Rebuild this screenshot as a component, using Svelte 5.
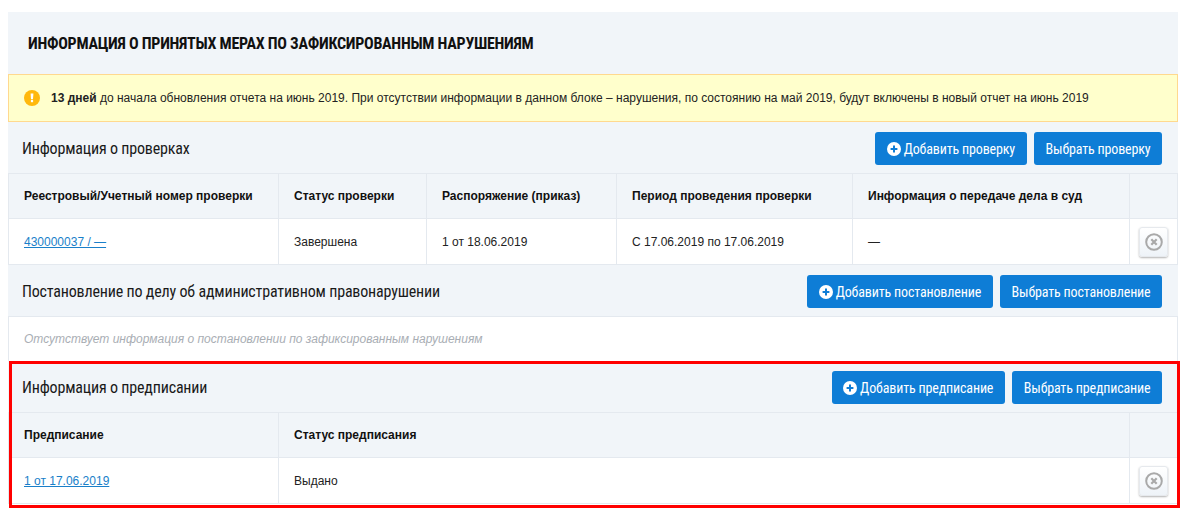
<script>
  const checks = [
    { number: '430000037 / —', status: 'Завершена', order: '1 от 18.06.2019', period: 'С 17.06.2019 по 17.06.2019', court: '—' }
  ];
</script>

{#snippet remove()}
  <button class="remove" aria-label="Удалить">
    <svg width="18" height="18" viewBox="0 0 18 18">
      <circle cx="9" cy="9" r="7.8" fill="none" stroke="#a9a9a9" stroke-width="2" />
      <path d="M6.3 6.3l5.4 5.4M11.7 6.3l-5.4 5.4" stroke="#a9a9a9" stroke-width="2.2" />
    </svg>
  </button>
{/snippet}

{#snippet plus()}
  <svg class="plus" width="14" height="14" viewBox="0 0 14 14">
    <circle cx="7" cy="7" r="7" fill="#fff" />
    <path d="M7 3.6v6.8M3.6 7h6.8" stroke="#0e7dd6" stroke-width="2" />
  </svg>
{/snippet}

<div class="page">
  <h1>Информация о принятых мерах по зафиксированным нарушениям</h1>

  <div class="alert">
    <svg width="16" height="16" viewBox="0 0 16 16">
      <circle cx="8" cy="8" r="8" fill="#ffb80d" />
      <path d="M6.6 3.6h2.8l-.4 5.6H7z" fill="#fff" />
      <rect x="6.9" y="10" width="2.2" height="2.2" fill="#fff" />
    </svg>
    <p><b>13 дней</b> до начала обновления отчета на июнь 2019. При отсутствии информации в данном блоке – нарушения, по состоянию на май 2019, будут включены в новый отчет на июнь 2019</p>
  </div>

  <section>
    <div class="head">
      <h2>Информация о проверках</h2>
      <div class="actions">
        <button class="btn">{@render plus()}Добавить проверку</button>
        <button class="btn">Выбрать проверку</button>
      </div>
    </div>
    <div class="table checks">
      <div class="th">Реестровый/Учетный номер проверки</div>
      <div class="th">Статус проверки</div>
      <div class="th">Распоряжение (приказ)</div>
      <div class="th">Период проведения проверки</div>
      <div class="th">Информация о передаче дела в суд</div>
      <div class="th"></div>
      {#each checks as row}
        <div class="td"><a href="#check">{row.number}</a></div>
        <div class="td">{row.status}</div>
        <div class="td">{row.order}</div>
        <div class="td">{row.period}</div>
        <div class="td">{row.court}</div>
        <div class="td tool">{@render remove()}</div>
      {/each}
    </div>
  </section>

  <section>
    <div class="head">
      <h2>Постановление по делу об административном правонарушении</h2>
      <div class="actions">
        <button class="btn">{@render plus()}Добавить постановление</button>
        <button class="btn">Выбрать постановление</button>
      </div>
    </div>
    <div class="empty">Отсутствует информация о постановлении по зафиксированным нарушениям</div>
  </section>

  <section class="marked">
    <div class="head">
      <h2>Информация о предписании</h2>
      <div class="actions">
        <button class="btn">{@render plus()}Добавить предписание</button>
        <button class="btn">Выбрать предписание</button>
      </div>
    </div>
    <div class="table orders">
      <div class="th">Предписание</div>
      <div class="th">Статус предписания</div>
      <div class="th"></div>
      <div class="td"><a href="#order">1 от 17.06.2019</a></div>
      <div class="td">Выдано</div>
      <div class="td tool">{@render remove()}</div>
    </div>
  </section>
</div>

<style>
  :global(body) {
    background: #fff;
    font-family: "Liberation Sans", Arial, sans-serif;
    font-size: 12px;
    color: #1a1a1a;
  }

  .page {
    width: 1170px;
    margin-left: 8px;
    padding: 12px 0 6px;
  }

  h1 {
    margin: 0;
    height: 62px;
    padding-left: 20px;
    display: flex;
    align-items: center;
    background: #f1f5f9;
    font-family: "Roboto Condensed", Roboto, sans-serif;
    font-size: 16px;
    font-weight: 700;
    letter-spacing: -0.28px;
    text-transform: uppercase;
    color: #111;
  }

  .alert {
    height: 48px;
    box-sizing: border-box;
    display: flex;
    align-items: center;
    gap: 11px;
    padding-left: 15px;
    background: #ffffcc;
    border: 1px solid #ffd98f;
  }

  .alert p {
    margin: 0;
    color: #222;
  }

  .head {
    height: 51px;
    box-sizing: border-box;
    display: flex;
    align-items: center;
    justify-content: space-between;
    padding: 2px 16px 0 14px;
    background: #f1f5f9;
  }

  h2 {
    margin: 0;
    font-family: "Roboto Condensed", Roboto, sans-serif;
    font-size: 16px;
    font-weight: 400;
    letter-spacing: -0.18px;
    color: #1a1a1a;
  }

  .actions {
    display: flex;
    gap: 7.5px;
  }

  .btn {
    height: 33px;
    padding: 0 11.5px;
    display: flex;
    align-items: center;
    gap: 3px;
    border: 0;
    border-radius: 3px;
    background: #0e7dd6;
    color: #fff;
    font-family: "Roboto Condensed", Roboto, sans-serif;
    font-size: 14px;
    letter-spacing: -0.15px;
  }

  .table {
    display: grid;
    border-right: 1px solid #e4e9ef;
    border-bottom: 1px solid #e4e9ef;
  }

  .checks {
    grid-template-columns: 270px 148px 190px 236px 277px 1fr;
  }

  .orders {
    grid-template-columns: 270px 851px 1fr;
  }

  .th, .td {
    box-sizing: border-box;
    display: flex;
    align-items: center;
    padding-left: 15px;
    border-left: 1px solid #e4e9ef;
    border-top: 1px solid #e4e9ef;
  }

  .th {
    height: 45px;
    background: #f1f5f9;
    font-weight: 700;
    color: #111;
  }

  .td {
    height: 46px;
    background: #fff;
    color: #222;
  }

  .td.tool {
    padding-left: 9px;
  }

  a {
    color: #1a7fc9;
  }

  .remove {
    width: 29px;
    height: 30px;
    padding: 0;
    display: flex;
    align-items: center;
    justify-content: center;
    border: 1px solid #e6e9ed;
    border-radius: 3px;
    background: linear-gradient(#fff, #eef3f8);
    box-shadow: 0 1px 2px rgba(0, 0, 0, 0.3);
  }

  .empty {
    height: 45px;
    box-sizing: border-box;
    display: flex;
    align-items: center;
    padding-left: 15px;
    border: 1px solid #e4e9ef;
    border-bottom: 0;
    font-style: italic;
    color: #a9aeb4;
  }

  .marked {
    position: relative;
  }

  .marked::after {
    content: "";
    position: absolute;
    left: 1px;
    right: -2px;
    top: 0;
    bottom: -4px;
    border: 3px solid #ff0000;
    pointer-events: none;
  }
</style>
